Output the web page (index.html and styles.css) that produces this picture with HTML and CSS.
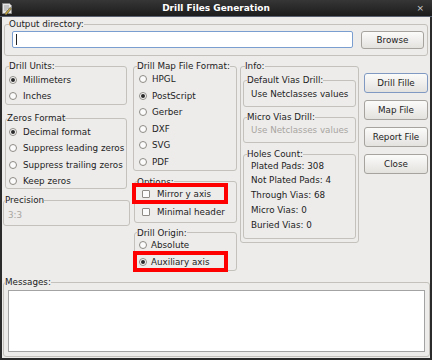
FILE: index.html
```html
<!DOCTYPE html>
<html lang="en">
<head>
    <meta charset="UTF-8">
    <meta name="viewport" content="width=device-width, initial-scale=1.0">
    <title>Drill Files Generation</title>
    <link rel="stylesheet" href="styles.css">
</head>
<body>
    <div class="window">
        <div class="titlebar">
            <svg class="app-icon" width="12" height="13" viewBox="0 0 12 13">
                <path d="M1.5 1.5h7l2 2v8h-9z" fill="#e6e6e6" stroke="#8a8a8a"/>
                <path d="M3 4h5M3 6h5M3 8h3" stroke="#a0a0a0"/>
                <path d="M4 11.5l5-6 1.5 1.2-5 6H4z" fill="#c9a93c" stroke="#444" stroke-width="0.6"/>
            </svg>
            <span class="title">Drill Files Generation</span>
            <span class="close">×</span>
        </div>

        <div class="client">
            <fieldset class="group output">
                <legend>Output directory:</legend>
                <div class="output-row">
                    <div class="text-input"><span class="caret"></span></div>
                    <button class="btn browse">Browse</button>
                </div>
            </fieldset>

            <div class="middle">
                <!-- left column -->
                <div class="col col-left">
                    <fieldset class="group units">
                        <legend>Drill Units:</legend>
                        <div class="opts">
                            <div class="opt"><span class="radio on"></span>Millimeters</div>
                            <div class="opt"><span class="radio"></span>Inches</div>
                        </div>
                    </fieldset>
                    <fieldset class="group zeros">
                        <legend>Zeros Format</legend>
                        <div class="opts">
                            <div class="opt"><span class="radio on"></span>Decimal format</div>
                            <div class="opt"><span class="radio"></span>Suppress leading zeros</div>
                            <div class="opt"><span class="radio"></span>Suppress trailing zeros</div>
                            <div class="opt"><span class="radio"></span>Keep zeros</div>
                        </div>
                    </fieldset>
                    <fieldset class="group precision">
                        <legend>Precision</legend>
                        <div class="opts">
                            <div class="opt disabled">3:3</div>
                        </div>
                    </fieldset>
                </div>

                <!-- map format / options column -->
                <div class="col col-mid">
                    <fieldset class="group map-format">
                        <legend>Drill Map File Format:</legend>
                        <div class="opts">
                            <div class="opt"><span class="radio"></span>HPGL</div>
                            <div class="opt"><span class="radio on"></span>PostScript</div>
                            <div class="opt"><span class="radio"></span>Gerber</div>
                            <div class="opt"><span class="radio"></span>DXF</div>
                            <div class="opt"><span class="radio"></span>SVG</div>
                            <div class="opt"><span class="radio"></span>PDF</div>
                        </div>
                    </fieldset>
                    <fieldset class="group options">
                        <legend>Options:</legend>
                        <div class="opts">
                            <div class="opt mark"><span class="check"></span>Mirror y axis</div>
                            <div class="opt"><span class="check"></span>Minimal header</div>
                        </div>
                    </fieldset>
                    <fieldset class="group origin">
                        <legend>Drill Origin:</legend>
                        <div class="opts">
                            <div class="opt"><span class="radio"></span>Absolute</div>
                            <div class="opt mark"><span class="radio on"></span>Auxiliary axis</div>
                        </div>
                    </fieldset>
                </div>

                <!-- info column -->
                <div class="col col-info">
                    <fieldset class="group info">
                        <legend>Info:</legend>
                        <fieldset class="group sub vias">
                            <legend>Default Vias Drill:</legend>
                            <div class="info-text">Use Netclasses values</div>
                        </fieldset>
                        <fieldset class="group sub micro">
                            <legend>Micro Vias Drill:</legend>
                            <div class="info-text disabled">Use Netclasses values</div>
                        </fieldset>
                        <fieldset class="group sub holes">
                            <legend>Holes Count:</legend>
                            <div class="info-text">
                                <div class="count">Plated Pads: 308</div>
                                <div class="count">Not Plated Pads: 4</div>
                                <div class="count">Through Vias: 68</div>
                                <div class="count">Micro Vias: 0</div>
                                <div class="count">Buried Vias: 0</div>
                            </div>
                        </fieldset>
                    </fieldset>
                </div>

                <!-- buttons -->
                <div class="col col-buttons">
                    <button class="btn default">Drill Fille</button>
                    <button class="btn">Map File</button>
                    <button class="btn">Report File</button>
                    <button class="btn">Close</button>
                </div>
            </div>

            <fieldset class="group messages">
                <legend>Messages:</legend>
                <div class="messages-box"></div>
            </fieldset>
        </div>
    </div>
</body>
</html>
```

FILE: styles.css
```css
body {
    margin: 0;
    font-family: 'DejaVu Sans', sans-serif;
    font-size: 8.75px;
    color: #222;
}

.window {
    width: 432px;
    height: 360px;
    display: flex;
    flex-direction: column;
    background: #edeceb;
}

/* title bar */
.titlebar {
    box-sizing: border-box;
    height: 17px;
    flex: none;
    display: grid;
    grid-template-columns: 1fr auto 1fr;
    align-items: center;
    background: linear-gradient(#363636, #1c1c1c);
    border-bottom: 1px solid #5a6170;
    color: #fff;
}

.app-icon {
    margin-left: 1px;
}

.title {
    font-size: 9px;
    font-weight: bold;
    line-height: 16px;
}

.close {
    justify-self: end;
    margin-right: 8px;
    color: #cfcfcf;
    font-size: 9px;
    line-height: 16px;
}

.client {
    flex: 1;
    display: flex;
    flex-direction: column;
    border: 2px solid #2b2b2b;
    border-top: 0;
    padding-bottom: 1px;
}

/* group boxes */
.group {
    margin: 0;
    padding: 0;
    min-width: 0;
    border: 1px solid #c4c1bc;
    border-radius: 3px;
}

.group legend {
    padding: 0;
    margin-left: 3px;
    line-height: 10px;
    white-space: nowrap;
}

.opts {
    display: flex;
    flex-direction: column;
}

.opt {
    display: flex;
    align-items: center;
    gap: 5px;
    height: 13px;
    white-space: nowrap;
}

.disabled {
    color: #a8a5a0;
}

.radio {
    box-sizing: border-box;
    width: 8px;
    height: 8px;
    border: 1px solid #8e8b86;
    border-radius: 50%;
    background: #fbfbfb;
    display: flex;
    align-items: center;
    justify-content: center;
    flex: none;
}

.radio.on::after {
    content: "";
    width: 4px;
    height: 4px;
    border-radius: 50%;
    background: #2a2a2a;
}

.check {
    box-sizing: border-box;
    width: 8px;
    height: 8px;
    border: 1px solid #8e8b86;
    border-radius: 1px;
    background: #fbfbfb;
    flex: none;
}

.mark {
    outline: 4px solid #ff0000;
}

/* buttons */
.btn {
    box-sizing: border-box;
    font: inherit;
    color: #222;
    padding: 0;
    border: 1px solid #a6a39e;
    border-radius: 3px;
    background: linear-gradient(#fbfbfa, #e4e2df);
}

.btn.default {
    border-color: #7f99c2;
}

/* output directory */
.output {
    margin: 2px 2px 0 2px;
}

.output legend {
    margin-left: 4px;
}

.output-row {
    display: flex;
    align-items: flex-start;
    gap: 8px;
    padding: 2px 3px 6px 7px;
}

.text-input {
    box-sizing: border-box;
    flex: 1;
    height: 17px;
    border: 1px solid #7b9ed0;
    border-radius: 2px;
    background: #fff;
    padding: 2px 3px;
}

.caret {
    display: block;
    width: 1px;
    height: 11px;
    background: #222;
}

.browse {
    width: 63px;
    height: 18px;
}

/* middle area */
.middle {
    flex: 1;
    display: flex;
    align-items: flex-start;
    padding: 5px 2px 0 3px;
}

.col {
    display: flex;
    flex-direction: column;
}

.col-left {
    width: 122px;
}

.units .opts {
    padding: 2px 0 2px 3px;
    gap: 3px;
}

.units .opt,
.zeros .opt {
    gap: 6px;
}

.zeros {
    margin-top: 8px;
}

.zeros legend {
    margin-left: 1px;
}

.zeros .opts {
    padding: 2px 0 0 3px;
    gap: 3.5px;
}

.precision {
    margin: 6.5px -3px 0 -2px;
}

.precision legend {
    margin-left: 1px;
}

.precision .opts {
    padding: 3px 0 4px 4px;
}

.col-mid {
    width: 104px;
    margin-left: 6px;
}

.map-format .opts {
    padding: 1.5px 0 1.5px 5px;
    gap: 3.6px;
}

.options {
    margin: 6px 0 0 1px;
}

.options legend,
.origin legend {
    margin-left: 2px;
}

.options .opts {
    padding: 0.5px 0 3.5px 7px;
    gap: 5px;
}

.options .opt {
    gap: 7px;
}

.options .mark {
    width: 82px;
    margin-left: -6px;
    padding-left: 6px;
}

.origin {
    margin: 5px 0 0 1px;
}

.origin .opts {
    padding: 0.5px 0 1.5px 4px;
    gap: 4px;
}

.origin .opt {
    gap: 4px;
}

.origin .mark {
    width: 85px;
    margin-left: -2px;
    padding-left: 2px;
}

/* info column */
.col-info {
    width: 119px;
    margin-left: 3px;
}

.info {
    padding: 0 2px 3px 2px;
}

.info legend {
    margin-left: 2px;
}

.info .sub legend {
    margin-left: 3px;
}

.info-text {
    padding-left: 7px;
    line-height: 13px;
    white-space: nowrap;
}

.vias {
    margin-top: 4px;
}

.vias .info-text {
    padding-top: 2.5px;
    padding-bottom: 5.5px;
}

.micro {
    margin-top: 5px;
}

.micro .info-text {
    padding-top: 1.5px;
    padding-bottom: 5.5px;
}

.holes {
    margin-top: 6px;
}

.holes .info-text {
    display: flex;
    flex-direction: column;
    gap: 1.75px;
    padding-top: 0.5px;
    padding-bottom: 6.5px;
}

.col-buttons {
    width: 64px;
    margin-left: 5px;
    padding-top: 12px;
    gap: 7px;
}

.col-buttons .btn {
    height: 20px;
}

/* messages */
.messages {
    box-sizing: border-box;
    height: 80px;
    margin: 0 0 0 1px;
}

.messages legend {
    margin-left: 1px;
}

.messages-box {
    box-sizing: border-box;
    height: 62px;
    margin: 3px 4px 0 4px;
    border: 1px solid #a3a3a3;
    background: #fff;
}
```
